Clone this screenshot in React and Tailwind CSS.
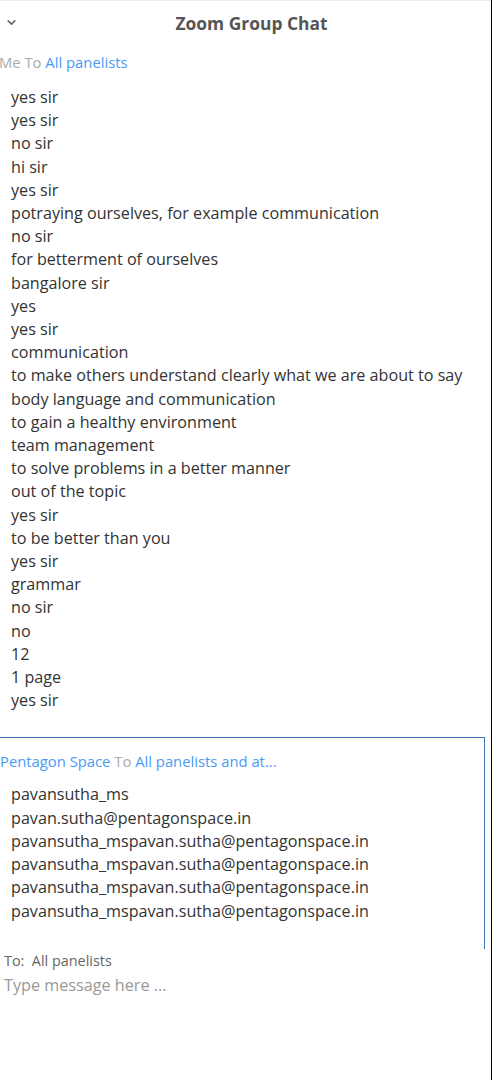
import { ChevronDown } from 'lucide-react';

const myMessages = [
  "yes sir",
  "yes sir",
  "no sir",
  "hi sir",
  "yes sir",
  "potraying ourselves, for example communication",
  "no sir",
  "for betterment of ourselves",
  "bangalore sir",
  "yes",
  "yes sir",
  "communication",
  "to make others understand clearly what we are about to say",
  "body language and communication",
  "to gain a healthy environment",
  "team management",
  "to solve problems in a better manner",
  "out of the topic",
  "yes sir",
  "to be better than you",
  "yes sir",
  "grammar",
  "no sir",
  "no",
  "12",
  "1 page",
  "yes sir",
];

const hostMessages = [
  "pavansutha_ms",
  "pavan.sutha@pentagonspace.in",
  "pavansutha_mspavan.sutha@pentagonspace.in",
  "pavansutha_mspavan.sutha@pentagonspace.in",
  "pavansutha_mspavan.sutha@pentagonspace.in",
  "pavansutha_mspavan.sutha@pentagonspace.in",
];

export default function App() {
  return (
    <div
      className="w-[492px] h-[1080px] bg-white flex overflow-hidden"
      style={{ fontFamily: "'Open Sans', 'Liberation Sans', sans-serif" }}
    >
      <div className="flex-1 flex flex-col border-t border-[#ececec]">
        {/* header */}
        <div className="relative h-[45px] flex items-center justify-center">
          <ChevronDown className="absolute left-[5px] top-[15px] w-[13px] h-[13px] text-[#666]" strokeWidth={3} />
          <h1 className="text-[17.4px] font-bold text-[#555] ml-[12px]">Zoom Group Chat</h1>
        </div>

        <div className="mt-[6px] text-[14.8px] leading-[20px] -ml-[1px]">
          <span className="text-[#aaa]">Me To </span>
          <span className="text-[#4a9bf5]">All panelists</span>
        </div>

        <div className="mt-[14px] pl-[11px] text-[16.15px] leading-[23.2px] text-[#333]">
          {myMessages.map((m, i) => (
            <div key={i}>{m}</div>
          ))}
        </div>

        <div className="mt-[25px] mr-[6px] h-[212px] border-t border-r border-[#3b78b4]">
          <div className="pt-[13px] text-[14.8px] leading-[20px]">
            <span className="text-[#4a9bf5]">Pentagon Space</span>
            <span className="text-[#aaa]"> To </span>
            <span className="text-[#4a9bf5]">All panelists and at...</span>
          </div>
          <div className="mt-[12px] pl-[11px] text-[16.15px] leading-[23.2px] text-[#333]">
            {hostMessages.map((m, i) => (
              <div key={i}>{m}</div>
            ))}
          </div>
        </div>

        <div className="pl-[4px] mt-[2px] text-[14.4px] leading-[20px] text-[#666]">
          To:&nbsp; All panelists
        </div>
        <div className="pl-[4px] mt-[2px] text-[16.2px] leading-[24px] text-[#999]">
          Type message here ...
        </div>
      </div>
      <div className="w-[1px] bg-black" />
    </div>
  );
}
